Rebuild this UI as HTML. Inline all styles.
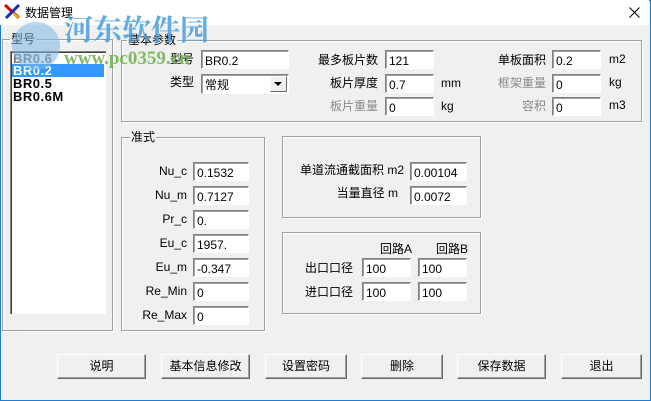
<!DOCTYPE html>
<html><head><meta charset="utf-8"><style>
*{margin:0;padding:0;box-sizing:border-box}
body{width:651px;height:401px;overflow:hidden;background:#f0f0f0;font-family:"Liberation Sans","Noto Sans CJK SC",sans-serif;font-size:12px;color:#000;position:relative}
.win{position:absolute;left:0;top:0;width:651px;height:401px;border:1px solid #1a7fd4}
.tb{position:absolute;left:0;top:0;width:649px;height:25px;background:#fff}
.a{position:absolute;white-space:nowrap;line-height:14px}
.g{position:absolute;border:1px solid #a0a0a0;box-shadow:inset 1px 1px 0 #fff,1px 1px 0 #fff}
.gl{position:absolute;background:#f0f0f0;padding:0 1px;line-height:14px;top:-8px}
.in{position:absolute;background:#fff;border-top:1px solid #808080;border-left:1px solid #808080;border-right:1px solid #fff;border-bottom:1px solid #fff;box-shadow:inset 1px 1px 0 #a0a0a0;height:19px;padding:3px 0 0 3px;font-size:12px;line-height:14px}
.gr{color:#8a8a8a}
.bt{position:absolute;top:354px;height:25px;background:#f0f0f0;border-top:1px solid #fff;border-left:1px solid #fff;border-right:1px solid #696969;border-bottom:1px solid #696969;box-shadow:inset -1px -1px 0 #a0a0a0;text-align:center;line-height:22px}
.r{text-align:right}
.li{font-weight:bold;font-size:13px;letter-spacing:0.5px}
</style></head><body>
<div class="win"></div>
<div class="tb"></div>
<svg style="position:absolute;left:4px;top:4px" width="17" height="15" viewBox="0 0 17 15"><path d="M1 1 L15 14" stroke="#d00" stroke-width="3"/><path d="M15 1 L2 14" stroke="#1030c0" stroke-width="3"/><path d="M9 9 L15 14" stroke="#e8c000" stroke-width="2"/></svg>
<div class="a" style="left:25px;top:6px;font-size:12px">数据管理</div>
<svg style="position:absolute;left:629px;top:7px" width="11" height="11"><path d="M0.5 0.5L10.5 10.5M10.5 0.5L0.5 10.5" stroke="#000" stroke-width="1"/></svg>

<div class="g" style="left:2px;top:39px;width:111px;height:292px"><div class="gl" style="left:7px">型号</div></div>
<div style="position:absolute;left:10px;top:51px;width:96px;height:263px;background:#fff;border-top:1px solid #808080;border-left:1px solid #808080;box-shadow:inset 1px 1px 0 #404040"></div>
<div class="a li" style="left:13px;top:52px;color:#777">BR0.6</div>
<div style="position:absolute;left:12px;top:64px;width:92px;height:13px;background:#3399ff"></div>
<div class="a li" style="left:13px;top:64px;color:#fff">BR0.2</div>
<div class="a li" style="left:13px;top:77px">BR0.5</div>
<div class="a li" style="left:13px;top:90px">BR0.6M</div>

<div class="g" style="left:121px;top:40px;width:521px;height:82px"><div class="gl" style="left:5px">基本参数</div></div>
<div class="a" style="left:170px;top:52px">型号</div>
<div class="in" style="left:201px;top:50px;width:88px">BR0.2</div>
<div class="a" style="left:170px;top:75px">类型</div>
<div class="in" style="left:201px;top:74px;width:88px;height:20px">常规</div>
<div style="position:absolute;left:270px;top:76px;width:17px;height:16px;background:#f0f0f0;border:1px solid #fff;border-right-color:#696969;border-bottom-color:#696969"></div>
<svg style="position:absolute;left:274px;top:82px" width="9" height="5"><path d="M0 0H8L4 4Z" fill="#000"/></svg>
<div class="a r" style="left:300px;top:53px;width:78px">最多板片数</div>
<div class="in" style="left:385px;top:50px;width:49px">121</div>
<div class="a r" style="left:300px;top:76px;width:78px">板片厚度</div>
<div class="in" style="left:385px;top:74px;width:49px">0.7</div>
<div class="a" style="left:441px;top:76px">mm</div>
<div class="a r gr" style="left:300px;top:99px;width:78px">板片重量</div>
<div class="in" style="left:385px;top:97px;width:49px">0</div>
<div class="a" style="left:441px;top:99px">kg</div>
<div class="a r" style="left:460px;top:53px;width:86px">单板面积</div>
<div class="in" style="left:552px;top:50px;width:49px">0.2</div>
<div class="a" style="left:609px;top:52px">m2</div>
<div class="a r gr" style="left:460px;top:76px;width:86px">框架重量</div>
<div class="in" style="left:552px;top:74px;width:49px">0</div>
<div class="a" style="left:609px;top:75px">kg</div>
<div class="a r gr" style="left:460px;top:99px;width:86px">容积</div>
<div class="in" style="left:552px;top:97px;width:49px">0</div>
<div class="a" style="left:609px;top:98px">m3</div>

<div class="g" style="left:121px;top:137px;width:144px;height:194px"><div class="gl" style="left:8px">准式</div></div>
<div class="a r" style="left:130px;top:164px;width:57px">Nu_c</div>
<div class="in" style="left:193px;top:162px;width:56px">0.1532</div>
<div class="a r" style="left:130px;top:188px;width:57px">Nu_m</div>
<div class="in" style="left:193px;top:186px;width:56px">0.7127</div>
<div class="a r" style="left:130px;top:212px;width:57px">Pr_c</div>
<div class="in" style="left:193px;top:210px;width:56px">0.</div>
<div class="a r" style="left:130px;top:236px;width:57px">Eu_c</div>
<div class="in" style="left:193px;top:234px;width:56px">1957.</div>
<div class="a r" style="left:130px;top:260px;width:57px">Eu_m</div>
<div class="in" style="left:193px;top:258px;width:56px">-0.347</div>
<div class="a r" style="left:130px;top:284px;width:57px">Re_Min</div>
<div class="in" style="left:193px;top:282px;width:56px">0</div>
<div class="a r" style="left:130px;top:308px;width:57px">Re_Max</div>
<div class="in" style="left:193px;top:306px;width:56px">0</div>

<div class="g" style="left:282px;top:136px;width:199px;height:82px"></div>
<div class="a r" style="left:290px;top:163px;width:114px">单道流通截面积 m2</div>
<div class="in" style="left:410px;top:162px;width:57px">0.00104</div>
<div class="a r" style="left:290px;top:186px;width:108px">当量直径 m</div>
<div class="in" style="left:410px;top:186px;width:57px">0.0072</div>

<div class="g" style="left:282px;top:232px;width:199px;height:82px"></div>
<div class="a" style="left:380px;top:242px">回路A</div>
<div class="a" style="left:436px;top:242px">回路B</div>
<div class="a" style="left:305px;top:261px">出口口径</div>
<div class="in" style="left:362px;top:258px;width:49px">100</div>
<div class="in" style="left:418px;top:258px;width:49px">100</div>
<div class="a" style="left:305px;top:285px">进口口径</div>
<div class="in" style="left:362px;top:282px;width:49px">100</div>
<div class="in" style="left:418px;top:282px;width:49px">100</div>

<div class="bt" style="left:57px;width:89px">说明</div>
<div class="bt" style="left:161px;width:89px">基本信息修改</div>
<div class="bt" style="left:265px;width:82px">设置密码</div>
<div class="bt" style="left:361px;width:82px">删除</div>
<div class="bt" style="left:457px;width:89px">保存数据</div>
<div class="bt" style="left:561px;width:81px">退出</div>

<div style="position:absolute;left:12px;top:22px;width:48px;height:48px;border-radius:50%;background:#7fb6e0;opacity:.55"></div>
<div class="a" style="left:64px;top:12px;font-size:29px;line-height:34px;font-weight:bold;color:#4b9fdc;opacity:.85;font-family:'Noto Serif CJK SC',serif">河东软件园</div>
<div class="a" style="left:64px;top:49px;font-size:19px;line-height:20px;font-weight:bold;color:#6cb04a;opacity:.85;font-family:'Liberation Serif',serif">www.pc0359.cn</div>
</body></html>
